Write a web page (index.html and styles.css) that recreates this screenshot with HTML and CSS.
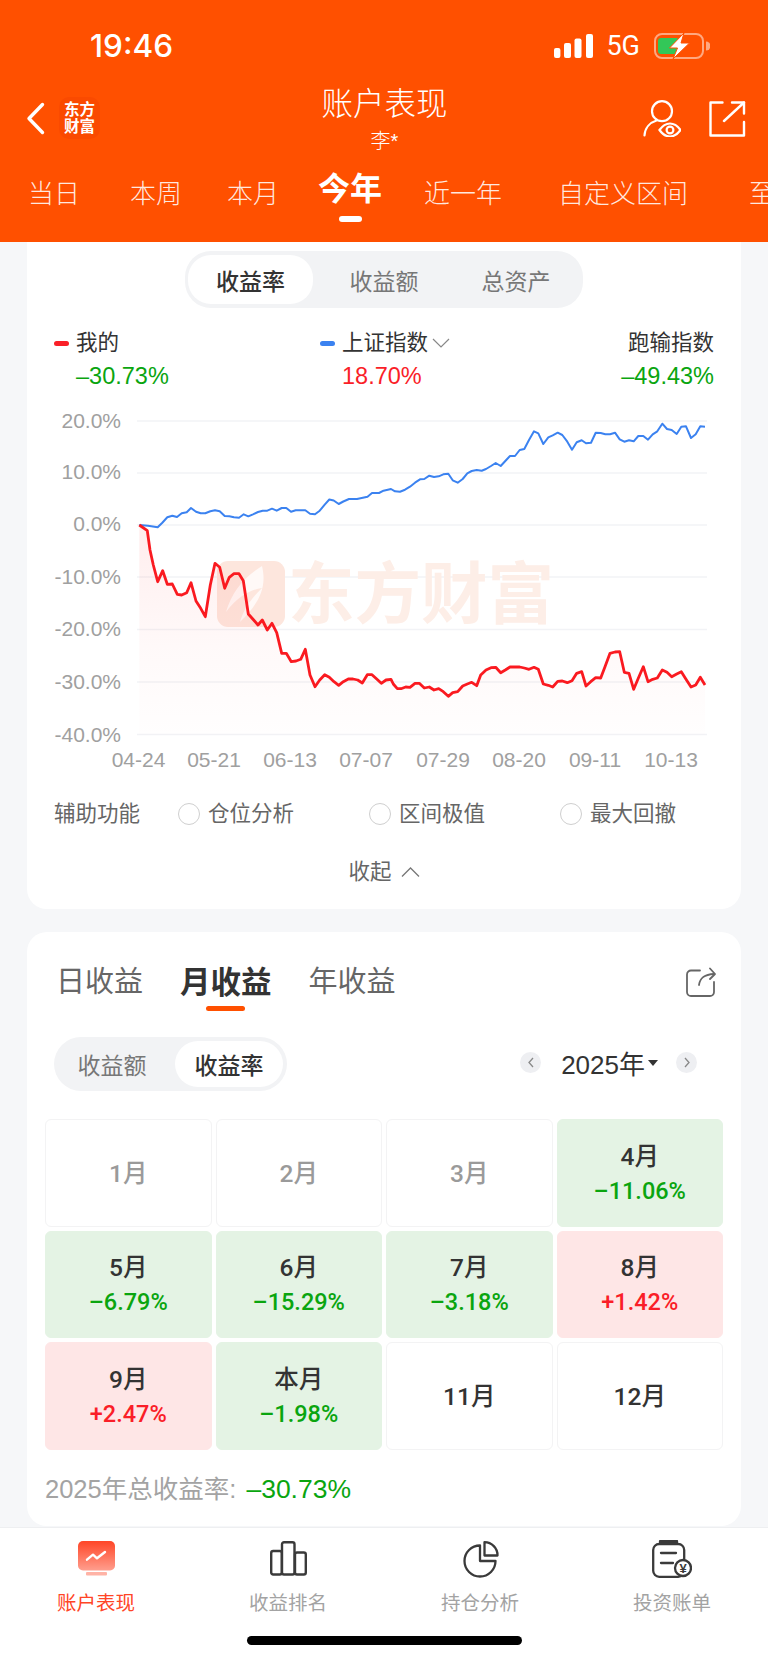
FILE: index.html
```html
<!DOCTYPE html>
<html lang="zh-CN">
<head>
    <meta charset="UTF-8">
    <meta name="viewport" content="width=device-width, initial-scale=1.0">
    <title>账户表现</title>
    <link rel="stylesheet" href="styles.css">
</head>
<body>
    <header class="top">
        <div class="status">
            <span class="time">19:46</span>
            <div class="status-right">
                <svg class="signal" width="39" height="24" viewBox="0 0 39 24"><rect x="0" y="14" width="6.4" height="10" rx="2"/><rect x="10" y="9" width="7" height="15" rx="2"/><rect x="20.5" y="4.5" width="7" height="19.5" rx="2"/><rect x="32" y="0" width="7" height="24" rx="2"/></svg>
                <span class="net">5G</span>
                <svg class="battery" width="56" height="26" viewBox="0 0 56 26">
                    <rect x="1" y="1" width="48" height="24" rx="7" fill="none" stroke="#ffffff" stroke-opacity="0.5" stroke-width="2"/>
                    <rect x="4" y="5" width="21" height="16" rx="3" fill="#33c758"/>
                    <path d="M52 8.5 a4 4 0 0 1 0 9z" fill="#ffffff" fill-opacity="0.5"/>
                    <path d="M30 0 L15.5 15 H23.5 L19 26 L35.5 10 H27 Z" fill="#ffffff" stroke="#ff5000" stroke-width="1"/>
                </svg>
            </div>
        </div>
        <div class="nav">
            <div class="nav-left">
                <svg class="back" width="19" height="33" viewBox="0 0 19 33"><path d="M16.5 2.5 L3 16.5 L16.5 30.5" fill="none" stroke="#fff" stroke-width="3.4" stroke-linecap="round" stroke-linejoin="round"/></svg>
                <div class="logo">东方<br>财富</div>
            </div>
            <div class="nav-title">
                <div class="title">账户表现</div>
                <div class="subtitle">李*</div>
            </div>
            <div class="nav-right">
                <svg width="38" height="37" viewBox="0 0 38 37" fill="none" stroke="#fff" stroke-width="2.2" stroke-linecap="round">
                    <circle cx="19" cy="11.2" r="10"/>
                    <path d="M1.5 35.5 C2 28 7 22.5 13.5 20.5"/>
                    <path d="M16.5 30 C20 25 23.5 23.5 27 23.5 C30.5 23.5 34 25 37.5 30 C34 35 30.5 36.5 27 36.5 C23.5 36.5 20 35 16.5 30Z" fill="#ff5000"/>
                    <circle cx="27" cy="30" r="3.4"/>
                </svg>
                <svg width="37" height="36" viewBox="0 0 37 36" fill="none" stroke="#fff" stroke-width="2.4" stroke-linecap="round" stroke-linejoin="round">
                    <path d="M13.5 1.5 H1.5 V34.5 H35 V21"/>
                    <path d="M15 20 L35 1.5"/>
                    <path d="M23 1.5 H35 V12.5"/>
                </svg>
            </div>
        </div>
        <nav class="periods">
            <span class="period">当日</span>
            <span class="period">本周</span>
            <span class="period">本月</span>
            <span class="period period-active">今年<i class="period-bar"></i></span>
            <span class="period">近一年</span>
            <span class="period">自定义区间</span>
            <span class="period">至今</span>
        </nav>
    </header>

    <main class="content">
        <section class="card card-chart">
            <div class="seg seg-big">
                <span class="seg-item active">收益率</span>
                <span class="seg-item">收益额</span>
                <span class="seg-item">总资产</span>
            </div>

            <div class="legend">
                <div class="legend-item">
                    <div class="legend-name"><i class="dash dash-red"></i>我的</div>
                    <div class="legend-val green">–30.73%</div>
                </div>
                <div class="legend-item">
                    <div class="legend-name"><i class="dash dash-blue"></i>上证指数<svg class="legend-arrow" width="18" height="10" viewBox="0 0 18 10"><path d="M1 1 L9 9 L17 1" fill="none" stroke="#888" stroke-width="1.2"/></svg></div>
                    <div class="legend-val red">18.70%</div>
                </div>
                <div class="legend-item legend-end">
                    <div class="legend-name">跑输指数</div>
                    <div class="legend-val green">–49.43%</div>
                </div>
            </div>

            <svg class="chart" width="714" height="370" viewBox="27 405 714 370">
                <defs>
                    <linearGradient id="redFill" x1="0" y1="0" x2="0" y2="1">
                        <stop offset="0" stop-color="#ff2020" stop-opacity="0.08"/>
                        <stop offset="0.6" stop-color="#ff2020" stop-opacity="0.025"/>
                        <stop offset="1" stop-color="#ff2020" stop-opacity="0.005"/>
                    </linearGradient>
                </defs>
                <g class="grid-lines">
                    <line x1="137" y1="421" x2="707" y2="421"/>
                    <line x1="137" y1="473" x2="707" y2="473"/>
                    <line x1="137" y1="525" x2="707" y2="525"/>
                    <line x1="137" y1="577" x2="707" y2="577"/>
                    <line x1="137" y1="629.5" x2="707" y2="629.5"/>
                    <line x1="137" y1="682" x2="707" y2="682"/>
                    <line x1="137" y1="734.5" x2="707" y2="734.5"/>
                </g>
                <!-- watermark -->
                <rect x="217" y="561" width="68" height="66" rx="11" fill="#fde6dd"/>
                <path d="M262 566 C243 578 232 592 226 612 C238 596 250 590 262 588 C252 598 244 608 240 622 C256 606 268 590 262 566Z" fill="#ffffff" fill-opacity="0.75"/>
                <text class="mark" x="288" y="618">东方财富</text>

                <g class="axis-y">
                    <text x="121" y="427.5">20.0%</text>
                    <text x="121" y="479">10.0%</text>
                    <text x="121" y="531">0.0%</text>
                    <text x="121" y="584">-10.0%</text>
                    <text x="121" y="636">-20.0%</text>
                    <text x="121" y="688.5">-30.0%</text>
                    <text x="121" y="741.5">-40.0%</text>
                </g>
                <g class="axis-x">
                    <text x="138.5" y="767">04-24</text>
                    <text x="214" y="767">05-21</text>
                    <text x="290" y="767">06-13</text>
                    <text x="366" y="767">07-07</text>
                    <text x="443" y="767">07-29</text>
                    <text x="519" y="767">08-20</text>
                    <text x="595" y="767">09-11</text>
                    <text x="671" y="767">10-13</text>
                </g>

                <polygon fill="url(#redFill)" points="139.3,525 147.3,530.7 150,550 153.3,565 157.7,581.7 162.7,570.7 167.3,584.3 172.3,584 177.3,594.3 181.7,595 186.7,592.7 191,582.7 196,601 200.7,608.3 205.3,616.7 210.3,585 215,563.3 219.7,567.3 224.7,588.3 229.3,577.3 234,573.7 239,573.7 243.3,580.7 248.3,614 253,619.3 258,625 262.3,620 267.3,630 272,623.3 276.7,632.7 281.7,653.3 286.3,653.3 291.3,661.7 296,661 300.7,659.3 305.3,649.3 310,675 315,686.7 319.7,680 324.7,674.7 329.3,677.3 334,681.7 338.7,685.3 343.3,681.7 348.3,679 353,679 357.7,680 362.3,683 367.3,674.7 372,674.7 376.7,679 381.3,683.3 386,680 391,679.3 393.3,684 397.3,688.7 401,688.7 405.7,687 410,687.3 415,683.3 419.3,683.3 424.3,688 429.3,687 434,690 438.7,688.7 443.3,691.7 448.3,696.3 452.7,692.7 457.7,691.7 462.7,686 467.3,684 471.7,682.3 476.7,685.7 480.7,675 486,670 491,667.7 495.7,667.3 500.7,672.7 505.3,670 510,667 515,667 519.7,667 524.3,668 529,669.3 534,667.3 538.3,669.3 543.3,684 548.3,685.3 552.7,687 557.7,681.3 562.3,681 567.3,682.7 572,680.7 576.7,673.3 581.7,671.7 586,686 590.7,681.7 595.7,677.7 600.7,678 605,666.7 610,653.3 615,652 619.7,651.7 624.3,672.3 629,673.3 633.7,689.3 638.3,678.3 643.3,666.7 648,681.7 652.7,679.3 657.3,678 662.3,670 667,672.3 671.7,676.7 676.7,674 681.3,671.7 686,679.3 691,687 695.7,685 700.3,677.3 705,685 705,735 139.3,735"/>
                <polyline class="line-blue" points="139.3,525 148,525.7 157.7,527.3 162.3,522.7 167.3,517.3 172.3,515.7 177,517 181.7,513.3 186.7,512.3 191,508 196,511.7 200.7,513.3 205.3,513.3 210.3,511.3 215,510.3 219.7,511.3 224.7,516 229.3,516.3 234,517.3 239,517.7 243.7,514.3 248.3,516.3 253,514.3 258,512 262.7,510.7 267.3,510.7 272,508.7 276.7,510.7 281.7,508 286.3,508 291,511.7 295.7,510.3 300.7,510.3 305.3,510.3 310,513.7 315,514.3 319.7,510.7 324.7,504.7 329.3,499.5 333.7,500.5 338.7,504 343.3,501.5 349,499 357,499 367.5,496.7 372,493 379,493 383.5,490.7 391,489 395,491.3 400,491.7 405,489.7 410,486.7 415,482.7 420,479.3 424.3,479 429.3,475.7 434,477 438.7,476.3 443.3,474.3 448.3,473.7 452.7,480.3 457.7,482.7 462.7,479 467.3,473.3 471.7,471 476.7,470 481.7,470.7 486,469 491,466 495.7,463 500.7,466 505.3,461 510,456 515,456 519.7,450 524.3,449 529,440 534,431.3 538.3,433.3 543.3,444 548.3,437.3 552.7,435.3 557.7,432.7 562.3,435 567.3,441.7 572,449.7 576.7,442.3 581.7,440.3 586,443.3 591,442.7 595.7,432.7 600.7,433 605.3,434.3 610,434.3 615,432.7 619.7,439.3 624.3,441.7 629,440.3 633.7,441.3 638.3,436 643.3,436 648,439.7 652.7,434.3 657.3,431.3 662.3,423.7 667,429 671.7,430 676.7,434 681.3,426.7 686,426.3 691,438 695.7,434.3 700.3,426.3 705,426.7"/>
                <polyline class="line-red" points="139.3,525 147.3,530.7 150,550 153.3,565 157.7,581.7 162.7,570.7 167.3,584.3 172.3,584 177.3,594.3 181.7,595 186.7,592.7 191,582.7 196,601 200.7,608.3 205.3,616.7 210.3,585 215,563.3 219.7,567.3 224.7,588.3 229.3,577.3 234,573.7 239,573.7 243.3,580.7 248.3,614 253,619.3 258,625 262.3,620 267.3,630 272,623.3 276.7,632.7 281.7,653.3 286.3,653.3 291.3,661.7 296,661 300.7,659.3 305.3,649.3 310,675 315,686.7 319.7,680 324.7,674.7 329.3,677.3 334,681.7 338.7,685.3 343.3,681.7 348.3,679 353,679 357.7,680 362.3,683 367.3,674.7 372,674.7 376.7,679 381.3,683.3 386,680 391,679.3 393.3,684 397.3,688.7 401,688.7 405.7,687 410,687.3 415,683.3 419.3,683.3 424.3,688 429.3,687 434,690 438.7,688.7 443.3,691.7 448.3,696.3 452.7,692.7 457.7,691.7 462.7,686 467.3,684 471.7,682.3 476.7,685.7 480.7,675 486,670 491,667.7 495.7,667.3 500.7,672.7 505.3,670 510,667 515,667 519.7,667 524.3,668 529,669.3 534,667.3 538.3,669.3 543.3,684 548.3,685.3 552.7,687 557.7,681.3 562.3,681 567.3,682.7 572,680.7 576.7,673.3 581.7,671.7 586,686 590.7,681.7 595.7,677.7 600.7,678 605,666.7 610,653.3 615,652 619.7,651.7 624.3,672.3 629,673.3 633.7,689.3 638.3,678.3 643.3,666.7 648,681.7 652.7,679.3 657.3,678 662.3,670 667,672.3 671.7,676.7 676.7,674 681.3,671.7 686,679.3 691,687 695.7,685 700.3,677.3 705,685"/>
            </svg>

            <div class="aux">
                <span>辅助功能</span>
                <span class="aux-opt"><i class="radio"></i>仓位分析</span>
                <span class="aux-opt"><i class="radio"></i>区间极值</span>
                <span class="aux-opt"><i class="radio"></i>最大回撤</span>
            </div>
            <div class="collapse">收起<svg width="19" height="10" viewBox="0 0 19 10"><path d="M1 9.5 L9.5 1 L18 9.5" fill="none" stroke="#777" stroke-width="1.3"/></svg></div>
        </section>

        <section class="card card-month">
            <div class="month-tabs">
                <span class="month-tab">日收益</span>
                <span class="month-tab month-tab-active">月收益<i class="month-bar"></i></span>
                <span class="month-tab">年收益</span>
                <svg class="month-share" width="30" height="30" viewBox="0 0 30 30" fill="none" stroke="#666" stroke-width="1.8" stroke-linecap="round" stroke-linejoin="round">
                    <path d="M14 3.5 H5 a4 4 0 0 0 -4 4 V25 a4 4 0 0 0 4 4 H24 a4 4 0 0 0 4 -4 V15"/>
                    <path d="M13 18 C14 11 18 7.5 28 7"/>
                    <path d="M24 1.5 L29 7 L24 12"/>
                </svg>
            </div>

            <div class="month-bar-row">
                <div class="seg seg-small">
                    <span class="seg-item">收益额</span>
                    <span class="seg-item active">收益率</span>
                </div>
                <div class="year-pick">
                    <span class="year-btn"><svg width="6" height="11" viewBox="0 0 6 11"><path d="M5 1 L1 5.5 L5 10" fill="none" stroke="#888" stroke-width="1.3"/></svg></span>
                    <span class="year-text">2025年</span>
                    <i class="caret"></i>
                    <span class="year-btn year-next"><svg width="6" height="11" viewBox="0 0 6 11"><path d="M1 1 L5 5.5 L1 10" fill="none" stroke="#888" stroke-width="1.3"/></svg></span>
                </div>
            </div>

            <div class="months">
                <div class="cell dim"><div>1月</div></div>
                <div class="cell dim"><div>2月</div></div>
                <div class="cell dim"><div>3月</div></div>
                <div class="cell down"><div>4月</div><div class="cell-val green">–11.06%</div></div>
                <div class="cell down"><div>5月</div><div class="cell-val green">–6.79%</div></div>
                <div class="cell down"><div>6月</div><div class="cell-val green">–15.29%</div></div>
                <div class="cell down"><div>7月</div><div class="cell-val green">–3.18%</div></div>
                <div class="cell up"><div>8月</div><div class="cell-val red">+1.42%</div></div>
                <div class="cell up"><div>9月</div><div class="cell-val red">+2.47%</div></div>
                <div class="cell down"><div>本月</div><div class="cell-val green">–1.98%</div></div>
                <div class="cell"><div>11月</div></div>
                <div class="cell"><div>12月</div></div>
            </div>

            <div class="total">2025年总收益率: <span class="green total-val">–30.73%</span></div>
        </section>
    </main>

    <footer class="tabbar">
        <div class="tabs">
            <div class="tab tab-active">
                <svg width="37" height="36" viewBox="0 0 37 36">
                    <defs>
                        <linearGradient id="tabFill" x1="0" y1="0" x2="0" y2="1">
                            <stop offset="0" stop-color="#ff4526"/>
                            <stop offset="1" stop-color="#ff9e8e"/>
                        </linearGradient>
                    </defs>
                    <rect x="0" y="0" width="37" height="29.5" rx="5" fill="url(#tabFill)"/>
                    <rect x="8" y="31" width="21" height="3.5" rx="1" fill="#ffb3a6"/>
                    <path d="M9 18.7 L15 13.7 L19 17.3 L27 11" fill="none" stroke="#fff" stroke-width="2.4" stroke-linecap="round" stroke-linejoin="round"/>
                </svg>
                <span>账户表现</span>
            </div>
            <div class="tab">
                <svg width="37" height="36" viewBox="0 0 37 36" fill="none" stroke="#3a3a3a" stroke-width="2.4">
                    <rect x="1.2" y="10" width="10.6" height="23.5" rx="2"/>
                    <rect x="12" y="1.2" width="12.5" height="32.3" rx="2"/>
                    <rect x="25" y="11.5" width="10.8" height="22" rx="2"/>
                </svg>
                <span>收益排名</span>
            </div>
            <div class="tab">
                <svg width="37" height="36" viewBox="0 0 37 36" fill="none" stroke="#3a3a3a" stroke-width="2.3" stroke-linejoin="round">
                    <path d="M18 4.5 A15.5 15.5 0 1 0 33.5 20 H18 Z"/>
                    <path d="M22.5 1.2 A13 13 0 0 1 35.5 14.5 H22.5 Z"/>
                </svg>
                <span>持仓分析</span>
            </div>
            <div class="tab">
                <svg width="40" height="38" viewBox="0 0 40 38" fill="none" stroke="#3a3a3a" stroke-width="2.3" stroke-linecap="round">
                    <rect x="1.2" y="4" width="31" height="32.8" rx="6"/>
                    <rect x="8" y="0.5" width="17" height="3" rx="1" fill="#3a3a3a"/>
                    <path d="M9 13 H24"/>
                    <path d="M9 23 H21"/>
                    <circle cx="31" cy="28" r="8" fill="#fff"/>
                    <text class="yen" x="31" y="32.5">¥</text>
                </svg>
                <span>投资账单</span>
            </div>
        </div>
        <div class="home-bar"></div>
    </footer>
</body>
</html>
```

FILE: styles.css
```css
* {
    box-sizing: border-box;
}
body {
    margin: 0;
    width: 768px;
    height: 1662px;
    overflow: hidden;
    display: flex;
    flex-direction: column;
    background-color: #f6f7f9;
    color: #333;
    font-family: "Liberation Sans", "Noto Sans CJK SC", sans-serif;
}
i {
    display: block;
    font-style: normal;
}
.green {
    color: #0aa50f;
}
.red {
    color: #fa1e28;
}

/* header */
.top {
    height: 242px;
    flex: none;
    background-color: #ff5000;
    color: #fff;
    overflow: hidden;
}
.status {
    height: 86px;
    display: flex;
    justify-content: space-between;
    align-items: center;
    padding: 5px 58px 0 90px;
}
.time {
    font-family: Inter, "Liberation Sans", sans-serif;
    font-size: 31.5px;
    font-weight: 500;
}
.status-right {
    display: flex;
    align-items: center;
}
.signal {
    fill: #fff;
}
.net {
    margin-left: 13px;
    font-size: 27px;
    font-family: Roboto, "Liberation Sans", sans-serif;
}
.battery {
    margin-left: 14px;
}
.nav {
    height: 84px;
    display: flex;
    align-items: flex-start;
}
.nav-left {
    flex: 1;
    display: flex;
    align-items: center;
    gap: 14px;
    padding: 11px 0 0 26px;
}
.logo {
    width: 41px;
    height: 42px;
    border-radius: 10px;
    background-color: #fa4a00;
    font-size: 15.5px;
    font-weight: 700;
    line-height: 17px;
    text-align: center;
    padding-top: 4px;
}
.nav-title {
    text-align: center;
    margin-left: -3px;
}
.title {
    font-size: 31.5px;
    font-weight: 300;
    line-height: 36px;
}
.subtitle {
    font-size: 20px;
    font-weight: 300;
    line-height: 24px;
    margin-top: 7px;
}
.nav-right {
    flex: 1;
    display: flex;
    justify-content: flex-end;
    align-items: center;
    gap: 28px;
    padding: 14px 22px 0 0;
}
.periods {
    display: flex;
    align-items: flex-start;
    white-space: nowrap;
    padding-left: 28px;
}
.period {
    font-size: 26px;
    font-weight: 300;
    line-height: 48px;
    color: rgba(255, 255, 255, 0.88);
    flex: none;
}
.period:nth-child(2) { margin-left: 50px; }
.period:nth-child(3) { margin-left: 45px; }
.period:nth-child(4) { margin-left: 39px; }
.period:nth-child(5) { margin-left: 42px; }
.period:nth-child(6) { margin-left: 56px; }
.period:nth-child(7) { margin-left: 61px; }
.period-active {
    font-size: 32px;
    font-weight: 700;
    line-height: 38px;
    color: #fff;
    display: flex;
    flex-direction: column;
    align-items: center;
}
.period-bar {
    width: 23px;
    height: 6px;
    margin-top: 8px;
    border-radius: 3px;
    background-color: #fff;
}

/* cards */
.content {
    height: 1285px;
    flex: none;
    overflow: hidden;
    padding: 0 27px;
}
.card {
    background-color: #fff;
    border-radius: 20px;
}
.card-chart {
    border-radius: 0 0 20px 20px;
    padding: 9px 0 22px;
    margin-bottom: 23px;
}
.seg {
    display: flex;
    background-color: #f2f3f5;
    color: #777;
}
.seg-item {
    display: flex;
    justify-content: center;
    align-items: center;
    font-size: 23px;
}
.seg-item.active {
    background-color: #fff;
    color: #333;
    font-weight: 500;
}
.seg-big {
    width: 398px;
    height: 57px;
    margin: 0 0 0 158px;
    padding: 4px 3px;
    border-radius: 26px;
}
.seg-big .seg-item {
    width: 142px;
    border-radius: 23px;
}
.seg-big .seg-item.active {
    width: 125px;
}
.seg-big .seg-item:last-child {
    width: 122px;
}
.seg-small {
    width: 233px;
    height: 54px;
    padding: 4px;
    border-radius: 27px;
}
.seg-small .seg-item {
    width: 117px;
    padding-right: 9px;
    border-radius: 23px;
}
.seg-small .seg-item.active {
    width: 108px;
    padding-right: 0;
}

.legend {
    display: grid;
    grid-template-columns: 266px 1fr auto;
    padding: 0 27px 0 27px;
    margin-top: 20px;
}
.legend-name {
    display: flex;
    align-items: center;
    font-size: 21.5px;
    line-height: 30px;
}
.legend-val {
    font-size: 23.5px;
    line-height: 30px;
    margin-top: 3px;
    padding-left: 22px;
}
.legend-end {
    text-align: right;
}
.legend-end .legend-name {
    justify-content: flex-end;
}
.legend-end .legend-val {
    padding-left: 0;
}
.dash {
    width: 15px;
    height: 5px;
    margin-right: 7px;
    border-radius: 3px;
}
.dash-red {
    background-color: #fa2028;
}
.dash-blue {
    background-color: #3b82f0;
}
.legend-arrow {
    margin-left: 4px;
}

/* chart */
.chart {
    display: block;
    margin-top: 14px;
}
.grid-lines line {
    stroke: #f2f3f6;
    stroke-width: 1.6;
}
.axis-y text,
.axis-x text {
    font-size: 21px;
    fill: #a0a0a0;
}
.axis-y text {
    text-anchor: end;
}
.axis-x text {
    text-anchor: middle;
}
.mark {
    font-size: 66.5px;
    font-weight: 700;
    fill: #fdeee7;
}
.line-blue,
.line-red {
    fill: none;
    stroke-linejoin: round;
}
.line-blue {
    stroke: #3b82f0;
    stroke-width: 2;
}
.line-red {
    stroke: #fa1a20;
    stroke-width: 2.8;
}

.aux {
    display: grid;
    grid-template-columns: 124px 191px 191px 1fr;
    align-items: center;
    margin-top: 24px;
    padding-left: 27px;
    font-size: 21.5px;
    line-height: 30px;
    color: #666;
}
.aux-opt {
    display: flex;
    align-items: center;
    gap: 8px;
}
.radio {
    width: 22px;
    height: 22px;
    border: 1.5px solid #cfcfcf;
    border-radius: 50%;
}
.collapse {
    display: flex;
    justify-content: center;
    align-items: center;
    gap: 9px;
    margin-top: 28px;
    font-size: 21.5px;
    line-height: 30px;
    color: #666;
}

/* month card */
.card-month {
    padding: 30px 18px 22px;
}
.month-tabs {
    display: flex;
    align-items: flex-start;
    gap: 37px;
    padding-left: 11px;
    height: 75px;
}
.month-tab {
    font-size: 29px;
    line-height: 40px;
    color: #666;
}
.month-tab-active {
    display: flex;
    flex-direction: column;
    align-items: center;
    font-size: 30.5px;
    font-weight: 700;
    color: #333;
}
.month-bar {
    width: 39px;
    height: 5px;
    margin-top: 4px;
    border-radius: 3px;
    background-color: #ff5000;
}
.month-share {
    margin: 5px 7px 0 auto;
}
.month-bar-row {
    display: flex;
    justify-content: space-between;
    align-items: center;
    padding: 0 26px 0 9px;
}
.year-pick {
    display: flex;
    align-items: center;
    margin-bottom: 3px;
}
.year-btn {
    width: 21px;
    height: 21px;
    border-radius: 50%;
    background-color: #eeeff2;
    display: flex;
    justify-content: center;
    align-items: center;
}
.year-text {
    margin: 0 0 1px 20px;
    font-size: 26px;
    color: #333;
}
.caret {
    width: 0;
    height: 0;
    margin-left: 3px;
    border-style: solid;
    border-width: 6px 5.5px 0;
    border-color: #333 transparent transparent;
}
.year-next {
    margin-left: 18px;
}
.months {
    display: grid;
    grid-template-columns: repeat(4, 1fr);
    grid-auto-rows: 107.5px;
    gap: 4px;
    margin-top: 28px;
}
.cell {
    display: flex;
    flex-direction: column;
    justify-content: center;
    align-items: center;
    padding-top: 2px;
    border: 1px solid #f3f3f4;
    border-radius: 6px;
    font-family: Roboto, "Noto Sans CJK SC", sans-serif;
    font-size: 24.5px;
    font-weight: 500;
    line-height: 34px;
    color: #333;
}
.cell.dim {
    color: #9a9a9a;
}
.cell.down {
    background-color: #e4f3e4;
    border-color: #e4f3e4;
}
.cell.up {
    background-color: #fee6e6;
    border-color: #fee6e6;
}
.cell-val {
    font-size: 23.5px;
}
.cell-val.green {
    color: #0aa50f;
}
.cell-val.red {
    color: #fa1e28;
}
.total {
    margin-top: 24px;
    font-size: 25.5px;
    line-height: 30px;
    color: #a3a3a3;
}
.total-val {
    margin-left: 3px;
    font-size: 26.5px;
}

/* bottom bar */
.tabbar {
    flex: 1;
    background-color: #fff;
    border-top: 1px solid #eeeff1;
}
.tabs {
    display: grid;
    grid-template-columns: repeat(4, 192px);
    padding-top: 12px;
}
.tab {
    display: flex;
    flex-direction: column;
    align-items: center;
    font-size: 19.5px;
    line-height: 28px;
    color: #a3a3a3;
}
.tab svg {
    height: 38px;
}
.tab span {
    margin-top: 11px;
}
.tab-active {
    color: #ff4526;
}
.yen {
    font-size: 13px;
    font-weight: 700;
    fill: #3a3a3a;
    stroke: none;
    text-anchor: middle;
}
.home-bar {
    width: 275px;
    height: 9px;
    margin: 19px auto 0;
    border-radius: 5px;
    background-color: #000;
}
```
